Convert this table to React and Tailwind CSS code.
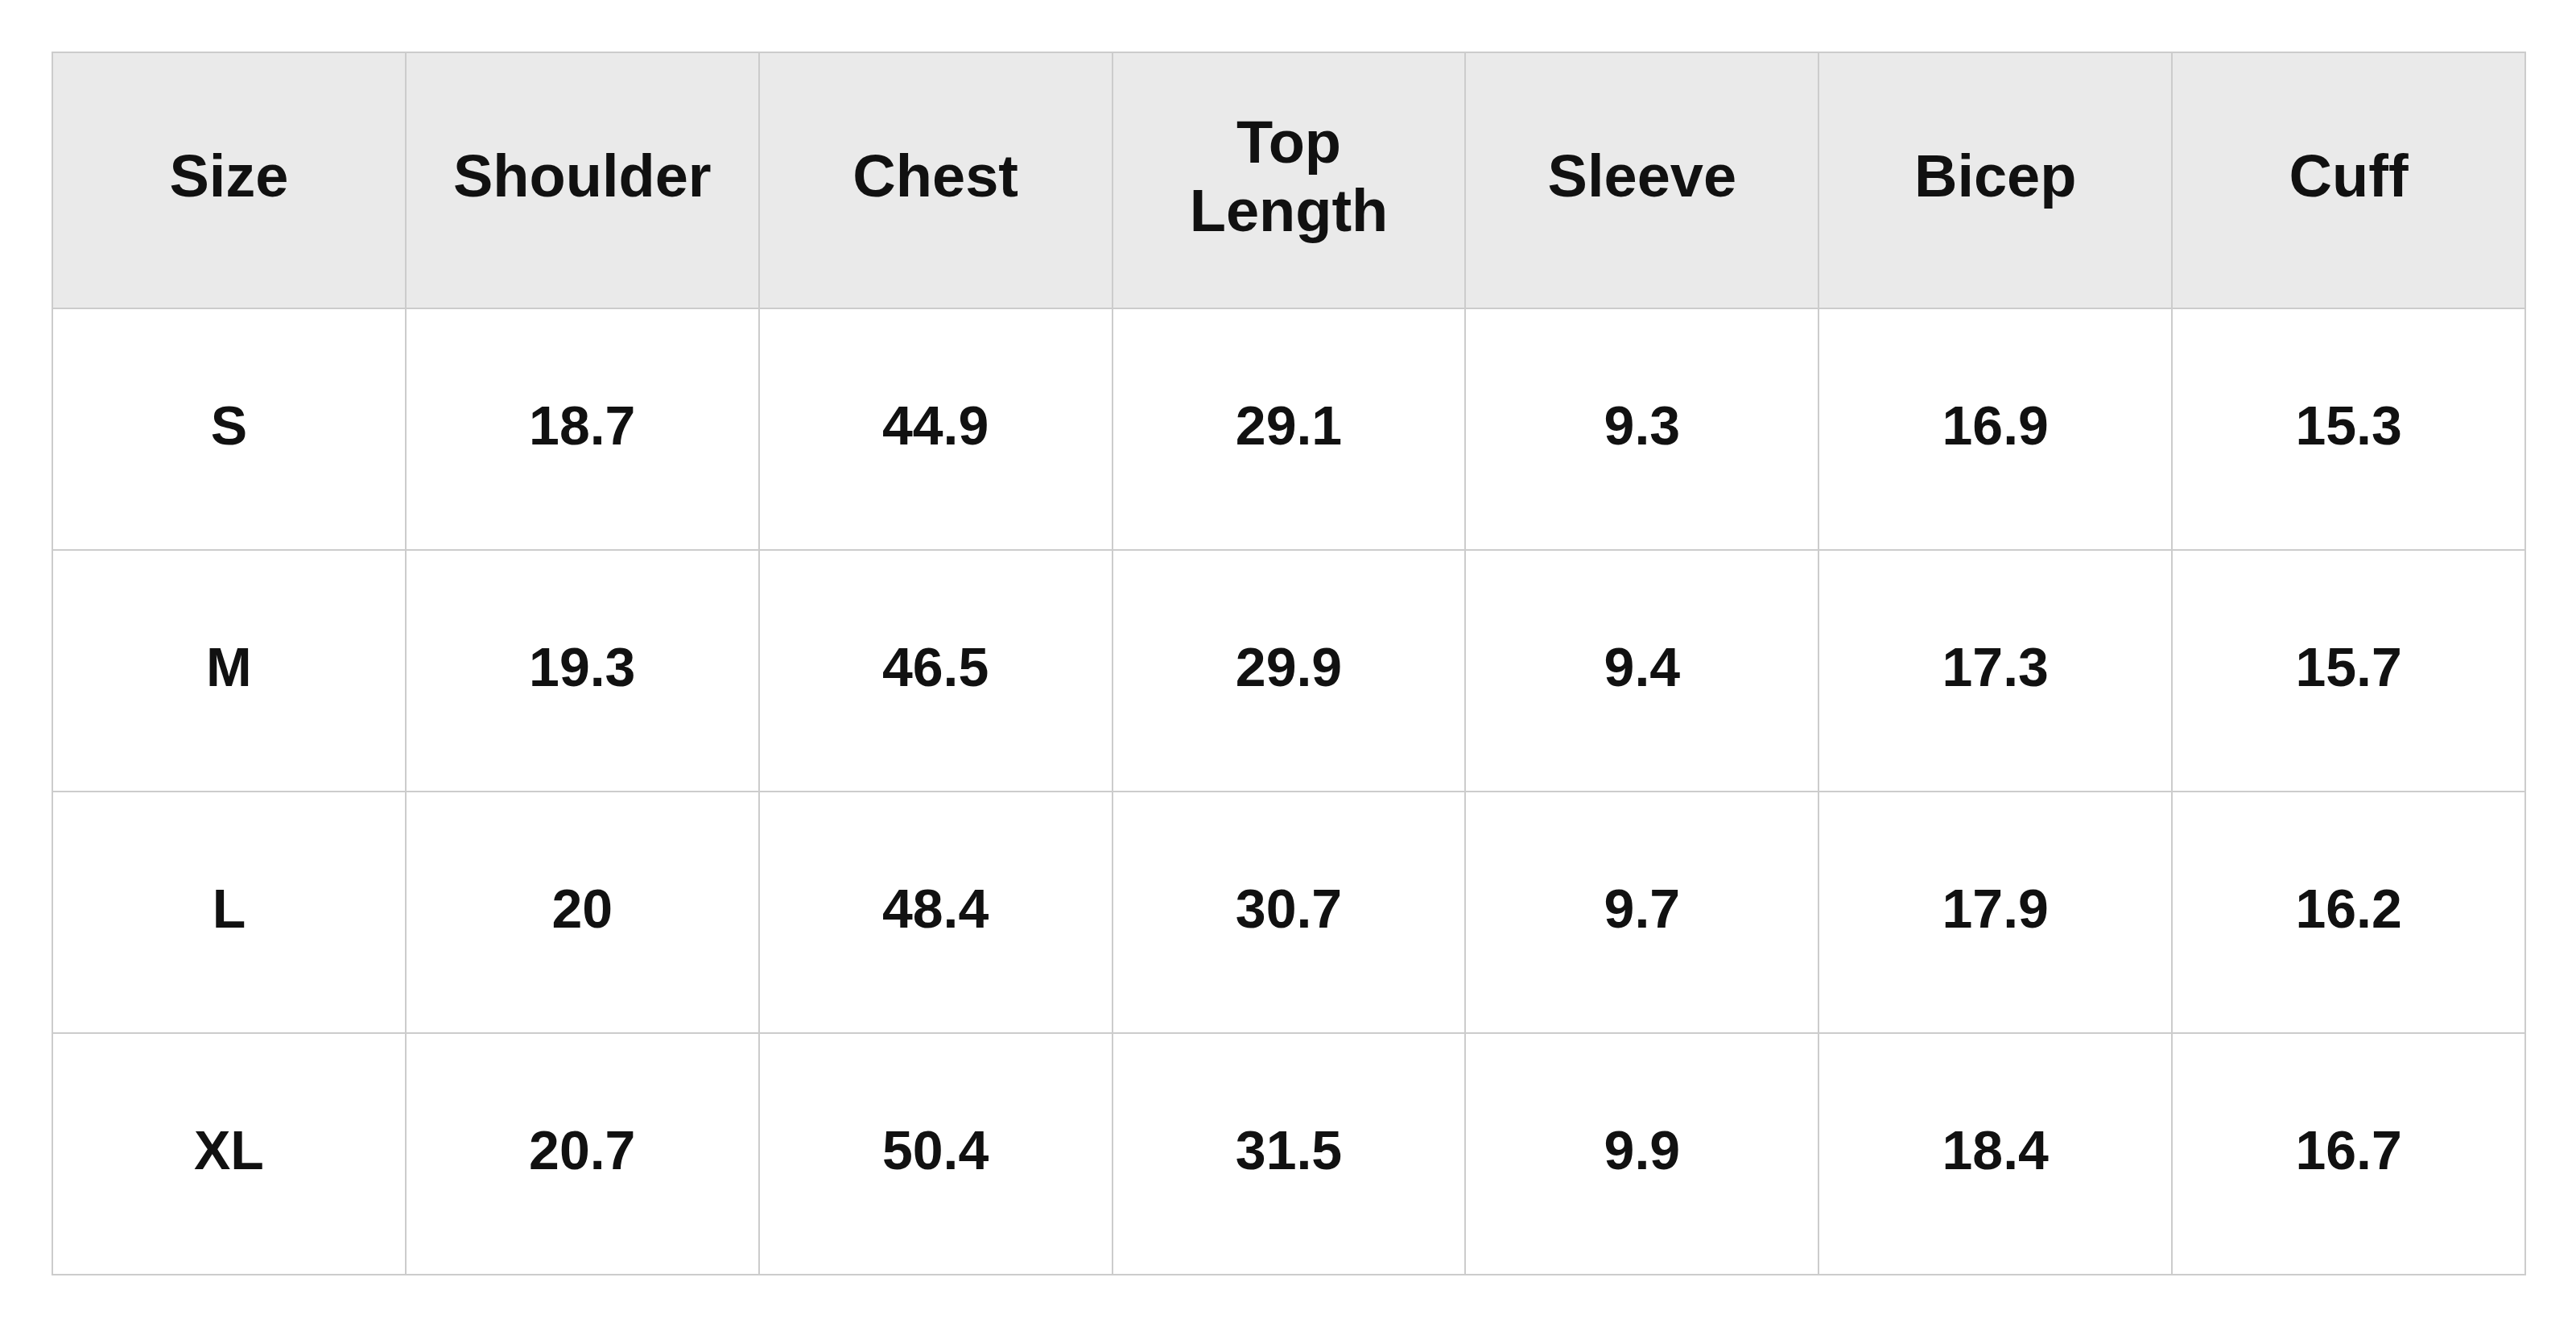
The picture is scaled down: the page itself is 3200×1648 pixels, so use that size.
const headers = ['Size', 'Shoulder', 'Chest', 'Top Length', 'Sleeve', 'Bicep', 'Cuff'];

const rows = [
    ['S', '18.7', '44.9', '29.1', '9.3', '16.9', '15.3'],
    ['M', '19.3', '46.5', '29.9', '9.4', '17.3', '15.7'],
    ['L', '20', '48.4', '30.7', '9.7', '17.9', '16.2'],
    ['XL', '20.7', '50.4', '31.5', '9.9', '18.4', '16.7'],
];

export default function App() {
    return (
        <div className="min-h-screen w-full bg-white p-[64px] font-['Liberation_Sans',Arial,sans-serif] text-[#111111]">
            <div className="grid w-[3074px] grid-cols-7 gap-[2px] bg-[#cccccc] p-[2px]">
                {headers.map(h => (
                    <div key={h} className="flex h-[316px] items-center justify-center bg-[#eaeaea] px-6 pb-[10px] text-center text-[74px] font-bold leading-[1.15]">
                        {h === 'Top Length' ? <span>Top<br />Length</span> : h}
                    </div>
                ))}
                {rows.map(r => r.map((v, i) => (
                    <div key={r[0] + i} className="flex h-[298px] items-center justify-center bg-white pb-[10px] text-[68px] font-bold">
                        {v}
                    </div>
                )))}
            </div>
        </div>
    );
}
